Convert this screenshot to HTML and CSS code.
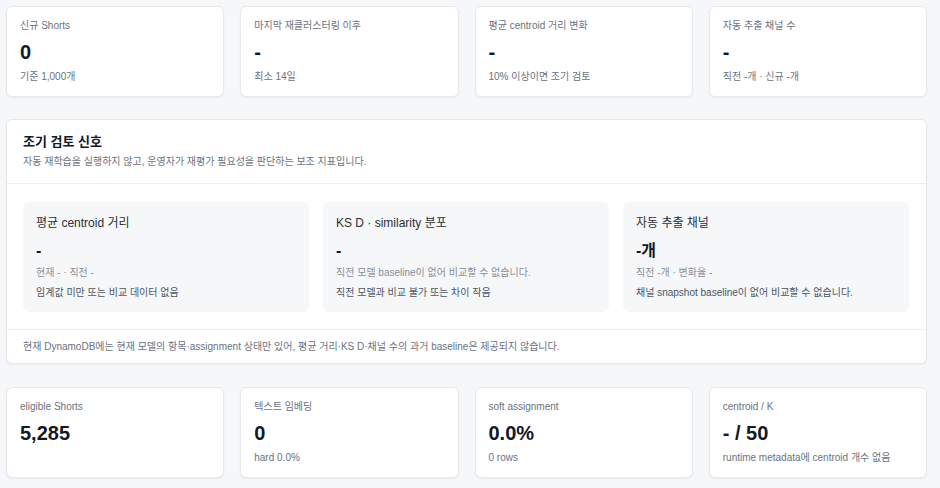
FILE: index.html
```html
<!DOCTYPE html>
<html lang="ko">
<head>
<meta charset="utf-8">
<title>Clustering</title>
<link rel="stylesheet" href="styles.css">
</head>
<body>
<div class="page">
  <div class="stats">
    <div class="card">
      <div class="label">신규 Shorts</div>
      <div class="value">0</div>
      <div class="sub">기준 1,000개</div>
    </div>
    <div class="card">
      <div class="label">마지막 재클러스터링 이후</div>
      <div class="value">-</div>
      <div class="sub">최소 14일</div>
    </div>
    <div class="card">
      <div class="label">평균 centroid 거리 변화</div>
      <div class="value">-</div>
      <div class="sub">10% 이상이면 조기 검토</div>
    </div>
    <div class="card">
      <div class="label">자동 추출 채널 수</div>
      <div class="value">-</div>
      <div class="sub">직전 -개 · 신규 -개</div>
    </div>
  </div>

  <section class="panel">
    <div class="panel-head">
      <h2 class="panel-title">조기 검토 신호</h2>
      <p class="panel-desc">자동 재학습을 실행하지 않고, 운영자가 재평가 필요성을 판단하는 보조 지표입니다.</p>
    </div>
    <div class="panel-body">
      <div class="signal">
        <div class="signal-title">평균 centroid 거리</div>
        <div class="signal-value">-</div>
        <div class="signal-meta">현재 - · 직전 -</div>
        <div class="signal-note">임계값 미만 또는 비교 데이터 없음</div>
      </div>
      <div class="signal">
        <div class="signal-title">KS D · similarity 분포</div>
        <div class="signal-value">-</div>
        <div class="signal-meta">직전 모델 baseline이 없어 비교할 수 없습니다.</div>
        <div class="signal-note">직전 모델과 비교 불가 또는 차이 작음</div>
      </div>
      <div class="signal">
        <div class="signal-title">자동 추출 채널</div>
        <div class="signal-value">-개</div>
        <div class="signal-meta">직전 -개 · 변화율 -</div>
        <div class="signal-note">채널 snapshot baseline이 없어 비교할 수 없습니다.</div>
      </div>
    </div>
    <div class="panel-foot">현재 DynamoDB에는 현재 모델의 항목·assignment 상태만 있어, 평균 거리·KS D·채널 수의 과거 baseline은 제공되지 않습니다.</div>
  </section>

  <div class="stats stats-bottom">
    <div class="card">
      <div class="label">eligible Shorts</div>
      <div class="value">5,285</div>
    </div>
    <div class="card">
      <div class="label">텍스트 임베딩</div>
      <div class="value">0</div>
      <div class="sub">hard 0.0%</div>
    </div>
    <div class="card">
      <div class="label">soft assignment</div>
      <div class="value">0.0%</div>
      <div class="sub">0 rows</div>
    </div>
    <div class="card">
      <div class="label">centroid / K</div>
      <div class="value">- / 50</div>
      <div class="sub">runtime metadata에 centroid 개수 없음</div>
    </div>
  </div>
</div>
</body>
</html>
```
FILE: styles.css
```css
* { box-sizing: border-box; }
html, body { margin: 0; padding: 0; }
body {
  background: #f6f7f9;
  font-family: "Liberation Sans", Arial, "Noto Sans CJK KR", sans-serif;
  color: #111827;
}
.page {
  padding: 6px 13px 10px 6px;
}
.stats {
  display: grid;
  grid-template-columns: repeat(4, 1fr);
  gap: 16px;
}
.stats-bottom { margin-top: 23px; }
.card {
  background: #ffffff;
  border: 1px solid #e6e8ec;
  border-radius: 6px;
  box-shadow: 0 1px 2px rgba(16, 24, 40, 0.05);
  padding: 12px 13px;
  min-height: 91px;
}
.label {
  font-size: 10px;
  line-height: 14px;
  color: #6b7280;
}
.value {
  margin-top: 7px;
  font-size: 20px;
  line-height: 24px;
  font-weight: 700;
  color: #111827;
}
.sub {
  margin-top: 6px;
  font-size: 10px;
  line-height: 14px;
  color: #6b7280;
}
.panel {
  margin-top: 22px;
  background: #ffffff;
  border: 1px solid #e6e8ec;
  border-radius: 6px;
  box-shadow: 0 1px 2px rgba(16, 24, 40, 0.05);
}
.panel-head {
  padding: 13px 16px 13px;
  border-bottom: 1px solid #eceef1;
}
.panel-title {
  margin: 0;
  font-size: 13px;
  line-height: 18px;
  font-weight: 700;
  color: #111827;
}
.panel-desc {
  margin: 3px 0 0;
  font-size: 10px;
  line-height: 16px;
  color: #6b7280;
}
.panel-body {
  display: grid;
  grid-template-columns: repeat(3, 1fr);
  gap: 14px;
  padding: 18px 17px 17px 16px;
}
.signal {
  background: #f6f7f9;
  border-radius: 6px;
  padding: 13px 13px 11px;
}
.signal-title {
  font-size: 12px;
  line-height: 16px;
  color: #2b2f36;
}
.signal-value {
  margin-top: 9px;
  font-size: 16px;
  line-height: 22px;
  font-weight: 700;
  color: #111827;
}
.signal-meta {
  margin-top: 3px;
  font-size: 10px;
  line-height: 16px;
  color: #8a8f98;
}
.signal-note {
  margin-top: 4px;
  font-size: 10px;
  line-height: 16px;
  color: #4b5563;
}
.panel-foot {
  border-top: 1px solid #eceef1;
  padding: 9px 16px 8px;
  font-size: 10px;
  line-height: 16px;
  color: #6b7280;
}
```
